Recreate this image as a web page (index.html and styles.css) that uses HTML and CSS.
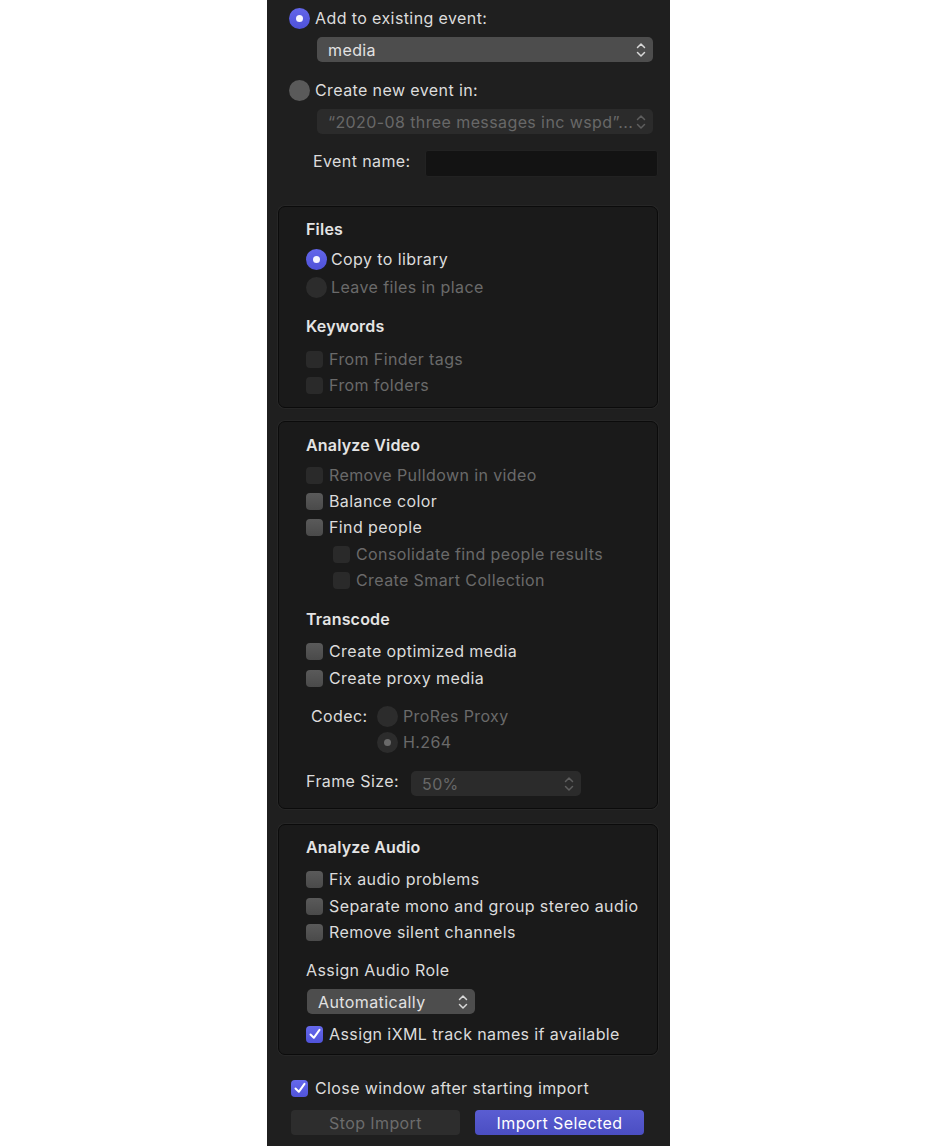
FILE: index.html
```html
<!DOCTYPE html>
<html>
<head>
<meta charset="utf-8">
<link rel="stylesheet" href="styles.css">
</head>
<body>
<div class="panel">
  <div class="row r-add">
    <span class="radio on"></span><span class="lbl">Add to existing event:</span>
  </div>
  <div class="popup wide p-media"><span>media</span><svg class="chev" viewBox="0 0 10 16"><path d="M1.5 5.5 L5 2 L8.5 5.5 M1.5 10.5 L5 14 L8.5 10.5"/></svg></div>
  <div class="row r-create">
    <span class="radio"></span><span class="lbl">Create new event in:</span>
  </div>
  <div class="popup wide dis p-lib"><span>“2020-08 three messages inc wspd”...</span><svg class="chev" viewBox="0 0 10 16"><path d="M1.5 5.5 L5 2 L8.5 5.5 M1.5 10.5 L5 14 L8.5 10.5"/></svg></div>
  <div class="ev-row">
    <span class="lbl">Event name:</span>
    <span class="field"></span>
  </div>

  <div class="box b1">
    <div class="hdr h-files">Files</div>
    <div class="row rb r-copy"><span class="radio on"></span><span class="lbl">Copy to library</span></div>
    <div class="row rb r-leave"><span class="radio dis"></span><span class="lbl dim">Leave files in place</span></div>
    <div class="hdr h-kw">Keywords</div>
    <div class="row r-finder"><span class="cb dis"></span><span class="lbl dim">From Finder tags</span></div>
    <div class="row"><span class="cb dis"></span><span class="lbl dim">From folders</span></div>
  </div>

  <div class="box b2">
    <div class="hdr h-av">Analyze Video</div>
    <div class="row r-pull"><span class="cb dis"></span><span class="lbl dim">Remove Pulldown in video</span></div>
    <div class="row"><span class="cb"></span><span class="lbl">Balance color</span></div>
    <div class="row"><span class="cb"></span><span class="lbl">Find people</span></div>
    <div class="row sub r-cons"><span class="cb dis"></span><span class="lbl dim">Consolidate find people results</span></div>
    <div class="row sub"><span class="cb dis"></span><span class="lbl dim">Create Smart Collection</span></div>
    <div class="hdr h-tc">Transcode</div>
    <div class="row r-opt"><span class="cb"></span><span class="lbl">Create optimized media</span></div>
    <div class="row r-proxy"><span class="cb"></span><span class="lbl">Create proxy media</span></div>
    <div class="codec">
      <span class="lbl codec-lbl">Codec:</span>
      <div class="codec-opts">
        <div class="row rc"><span class="radio dis"></span><span class="lbl dim">ProRes Proxy</span></div>
        <div class="row rc"><span class="radio dis dot"></span><span class="lbl dim">H.264</span></div>
      </div>
    </div>
    <div class="fs-row">
      <span class="lbl">Frame Size:</span>
      <div class="popup dis p-fs"><span>50%</span><svg class="chev" viewBox="0 0 10 16"><path d="M1.5 5.5 L5 2 L8.5 5.5 M1.5 10.5 L5 14 L8.5 10.5"/></svg></div>
    </div>
  </div>

  <div class="box b3">
    <div class="hdr h-aa">Analyze Audio</div>
    <div class="row r-fix"><span class="cb"></span><span class="lbl">Fix audio problems</span></div>
    <div class="row r-sep"><span class="cb"></span><span class="lbl">Separate mono and group stereo audio</span></div>
    <div class="row"><span class="cb"></span><span class="lbl">Remove silent channels</span></div>
    <div class="sublbl">Assign Audio Role</div>
    <div class="popup p-role"><span>Automatically</span><svg class="chev" viewBox="0 0 10 16"><path d="M1.5 5.5 L5 2 L8.5 5.5 M1.5 10.5 L5 14 L8.5 10.5"/></svg></div>
    <div class="row r-ixml"><span class="cb on"><svg viewBox="0 0 16 16"><path d="M3.5 8.5 L6.8 11.8 L12.5 3.8"/></svg></span><span class="lbl">Assign iXML track names if available</span></div>
  </div>

  <div class="row r-close"><span class="cb on"><svg viewBox="0 0 16 16"><path d="M3.5 8.5 L6.8 11.8 L12.5 3.8"/></svg></span><span class="lbl">Close window after starting import</span></div>
  <div class="btns">
    <div class="btn stop">Stop Import</div>
    <div class="btn go">Import Selected</div>
  </div>
</div>
</body>
</html>
```

FILE: styles.css
```css
html, body {
  margin: 0;
  padding: 0;
  background: #ffffff;
}
body {
  font-family: "Inter", "Noto Sans", "Liberation Sans", sans-serif;
  font-size: 16px;
  letter-spacing: 0.4px;
  color: #dcdcdc;
}
.panel {
  margin-left: 267px;
  width: 403px;
  height: 1146px;
  overflow: hidden;
  background: #1f1f1f;
  padding-top: 5px;
  box-sizing: border-box;
}
.row {
  height: 26px;
  display: flex;
  align-items: center;
}
.lbl { white-space: nowrap; }
.dim { color: #6a6a6a; }

.r-add, .r-create { padding-left: 22px; }
.r-add .lbl, .r-create .lbl { margin-left: 5px; }
.r-create { margin-top: 15px; }

.radio {
  width: 21px;
  height: 21px;
  border-radius: 50%;
  background: #5a5a5a;
  box-sizing: border-box;
  flex: none;
  position: relative;
}
.radio.on {
  background: linear-gradient(#6366ea, #4e51d8);
}
.radio.on::after, .radio.dot::after {
  content: "";
  position: absolute;
  left: 7px;
  top: 7px;
  width: 7px;
  height: 7px;
  border-radius: 50%;
  background: #f4f4ff;
}
.radio.dis { background: #2c2c2c; }
.radio.dot::after { background: #6a6a6a; }

.popup {
  height: 25px;
  border-radius: 5px;
  background: #4d4d4d;
  display: flex;
  align-items: center;
  justify-content: space-between;
  padding: 0 7px 0 11px;
  box-sizing: border-box;
  color: #e2e2e2;
}
.popup.dis { background: #2b2b2b; color: #686868; }
.popup.wide { margin-left: 50px; width: 336px; }
.p-media { margin-top: 6px; }
.p-lib { margin-top: 6px; }
.chev {
  width: 10px;
  height: 16px;
  flex: none;
}
.chev path {
  fill: none;
  stroke: #d8d8d8;
  stroke-width: 1.5;
  stroke-linecap: round;
  stroke-linejoin: round;
}
.popup.dis .chev path { stroke: #5e5e5e; }

.ev-row {
  margin-top: 16px;
  height: 27px;
  display: flex;
  align-items: flex-start;
  padding-left: 46px;
}
.ev-row .lbl { width: 112px; line-height: 22px; }
.field {
  width: 233px;
  height: 27px;
  background: #131313;
  border: 1px solid #222222;
  border-radius: 3px;
  box-sizing: border-box;
}

.box {
  margin-left: 11px;
  width: 380px;
  box-sizing: border-box;
  border: 1px solid #0b0b0b;
  border-radius: 7px;
  background: #1a1a1a;
  padding-left: 27px;
  box-shadow: 0 0 0 1px #262626;
}
.b1 { margin-top: 29px; padding-bottom: 9px; }
.b2 { margin-top: 13px; padding-bottom: 12px; }
.b3 { margin-top: 15px; padding-bottom: 7px; }

.hdr {
  height: 22px;
  line-height: 22px;
  font-weight: 600;
  color: #e4e4e4;
  letter-spacing: 0.2px;
}
.h-files { margin-top: 11px; }
.h-kw { margin-top: 15px; }
.h-av { margin-top: 12px; }
.h-tc { margin-top: 15px; }
.h-aa { margin-top: 11px; }

.rb .lbl { margin-left: 4px; }
.r-copy { margin-top: 6px; }
.r-leave { margin-top: 2px; }
.r-finder { margin-top: 9px; }

.cb {
  width: 17px;
  height: 17px;
  border-radius: 4px;
  background: linear-gradient(#5a5a5a, #4a4a4a);
  flex: none;
  margin-right: 6px;
  box-sizing: border-box;
  display: flex;
  align-items: center;
  justify-content: center;
}
.cb.dis { background: #2a2a2a; }
.cb.on { background: linear-gradient(#6669ec, #5053da); }
.cb svg { width: 16px; height: 16px; }
.cb svg path {
  fill: none;
  stroke: #ffffff;
  stroke-width: 2;
  stroke-linecap: round;
  stroke-linejoin: round;
}

.r-pull { margin-top: 6px; }
.sub { padding-left: 27px; }
.r-cons { margin-top: 1px; }
.r-opt { margin-top: 8px; }
.r-proxy { margin-top: 1px; }

.codec {
  margin-top: 12px;
  display: flex;
  align-items: flex-start;
}
.codec-lbl {
  margin-left: 5px;
  height: 26px;
  line-height: 26px;
  width: 66px;
}
.rc .lbl { margin-left: 5px; }

.fs-row {
  margin-top: 16px;
  display: flex;
  align-items: flex-start;
  height: 25px;
}
.fs-row .lbl { width: 105px; line-height: 21px; }
.p-fs { width: 170px; }

.r-fix { margin-top: 8px; }
.r-sep { margin-top: 1px; }
.sublbl {
  margin-top: 14px;
  height: 22px;
  line-height: 22px;
}
.p-role {
  margin-top: 8px;
  width: 168px;
  margin-left: 1px;
}
.r-ixml { margin-top: 7px; }

.r-close {
  margin-top: 20px;
  padding-left: 24px;
}
.r-close .cb { margin-right: 7px; }

.btns {
  margin-top: 9px;
  display: flex;
  padding-left: 24px;
  gap: 15px;
}
.btn {
  width: 169px;
  height: 25px;
  border-radius: 4px;
  display: flex;
  align-items: center;
  justify-content: center;
}
.stop { background: #2d2d2d; color: #6c6c6c; }
.go { background: linear-gradient(#5a5dd2, #4b4ec2); color: #ffffff; }
```
